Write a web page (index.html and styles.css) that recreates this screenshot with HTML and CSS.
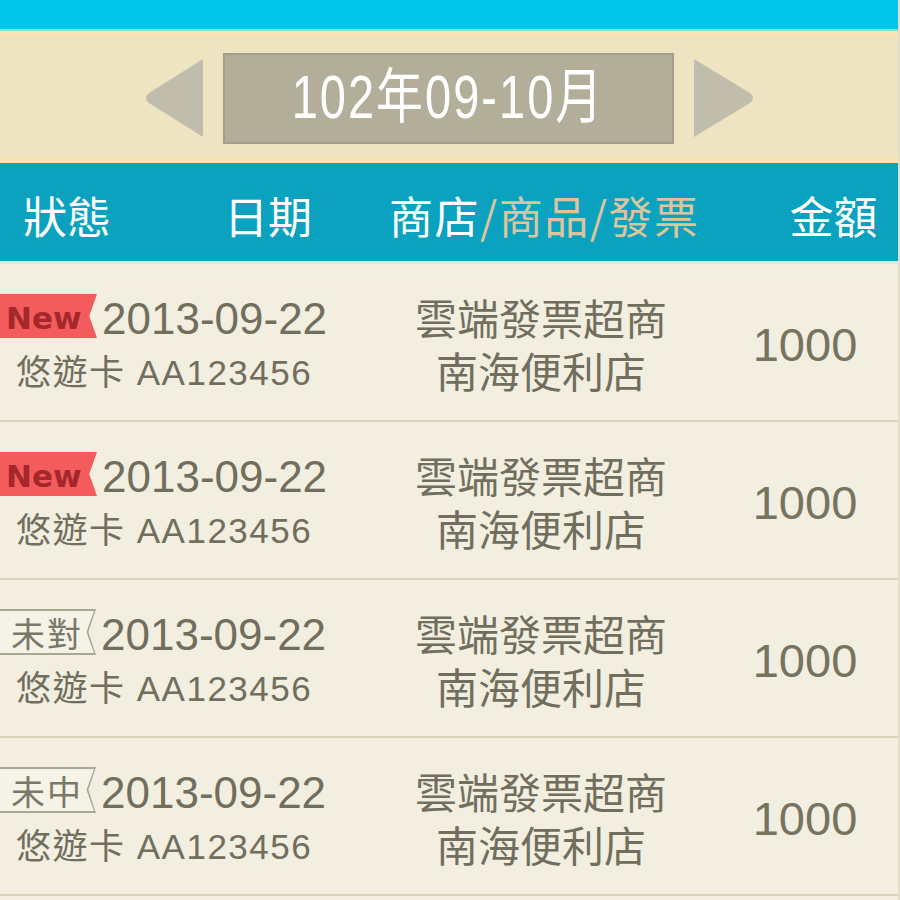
FILE: index.html
```html
<!DOCTYPE html>
<html lang="zh-Hant">
<head>
<meta charset="utf-8">
<title>發票</title>
<link rel="stylesheet" href="styles.css">
</head>
<body>
<div class="app">
  <div class="topbar"></div>
  <div class="period">
    <svg class="arrow" width="60" height="78" viewBox="0 0 60 78"><path d="M60 0 V78 L6 44 Q0 39 6 34 Z" fill="#c1bdad"/></svg>
    <div class="month"><span class="month-text">102年09-10月</span></div>
    <svg class="arrow" width="62" height="78" viewBox="0 0 62 78"><path d="M0 0 V78 L56 44 Q62 39 56 34 Z" fill="#c1bdad"/></svg>
  </div>
  <div class="thead">
    <span class="th th-status">狀態</span>
    <span class="th th-date">日期</span>
    <span class="th th-store">商店<span class="th-sub">/商品/發票</span></span>
    <span class="th th-amount">金額</span>
  </div>
  <div class="rows">
    <div class="row">
      <div class="cell-left">
        <div class="line1"><span class="tag tag-new">New</span><span class="date">2013-09-22</span></div>
        <div class="card">悠遊卡 AA123456</div>
      </div>
      <div class="cell-store"><div class="store-line">雲端發票超商</div><div class="store-line">南海便利店</div></div>
      <div class="cell-amount">1000</div>
    </div>
    <div class="row">
      <div class="cell-left">
        <div class="line1"><span class="tag tag-new">New</span><span class="date">2013-09-22</span></div>
        <div class="card">悠遊卡 AA123456</div>
      </div>
      <div class="cell-store"><div class="store-line">雲端發票超商</div><div class="store-line">南海便利店</div></div>
      <div class="cell-amount">1000</div>
    </div>
    <div class="row">
      <div class="cell-left">
        <div class="line1"><span class="tag tag-outline"><span class="tag-inner">未對</span></span><span class="date">2013-09-22</span></div>
        <div class="card">悠遊卡 AA123456</div>
      </div>
      <div class="cell-store"><div class="store-line">雲端發票超商</div><div class="store-line">南海便利店</div></div>
      <div class="cell-amount">1000</div>
    </div>
    <div class="row">
      <div class="cell-left">
        <div class="line1"><span class="tag tag-outline"><span class="tag-inner">未中</span></span><span class="date">2013-09-22</span></div>
        <div class="card">悠遊卡 AA123456</div>
      </div>
      <div class="cell-store"><div class="store-line">雲端發票超商</div><div class="store-line">南海便利店</div></div>
      <div class="cell-amount">1000</div>
    </div>
  </div>
</div>
</body>
</html>
```
FILE: styles.css
```css
* { box-sizing: border-box; }
html, body { margin: 0; padding: 0; }
body {
  background: #f2eee0;
  font-family: "Liberation Sans", "Noto Sans CJK TC", sans-serif;
  color: #716e5e;
}
.app {
  width: 900px;
  height: 900px;
  overflow: hidden;
  border-right: 2px solid #e2dcc8;
}
.topbar {
  height: 31px;
  background: #00c6ea;
  border-bottom: 2px solid #8fd8de;
}
.period {
  height: 132px;
  background: #efe4c1;
  border-top: 5px solid #fde3b0;
  border-bottom: 5px solid #fde3b0;
  display: flex;
  align-items: center;
  justify-content: center;
  gap: 19px;
  padding-top: 2px;
}
.arrow { display: block; }
.month {
  width: 451px;
  height: 91px;
  background: #b2ae9a;
  border: 2px solid #a29e8b;
  display: flex;
  align-items: center;
  justify-content: center;
  margin: 0 1px;
}
.month-text {
  display: inline-block;
  color: #ffffff;
  font-family: "Liberation Sans", "Noto Sans CJK TC", sans-serif;
  font-size: 47px;
  line-height: 50px;
  letter-spacing: 2px;
  transform: scaleY(1.28);
}
.thead {
  height: 101px;
  background: #0ba2c0;
  border-bottom: 3px solid #e3e7db;
  display: flex;
  align-items: center;
  padding-left: 23px;
  padding-top: 6px;
  font-family: "Noto Sans CJK TC", sans-serif;
  font-size: 44px;
  line-height: 50px;
  color: #ffffff;
}
.th-date { margin-left: 113px; }
.th-store { margin-left: 77px; letter-spacing: 1.5px; }
.th-sub { color: #dcc59c; }
.th-amount { margin-left: 90px; }
.row {
  display: grid;
  grid-template-columns: 372px 338px 190px;
  height: 158px;
  border-bottom: 2px solid #dad2b9;
}
.cell-left {
  padding-top: 29px;
}
.line1 {
  display: flex;
  align-items: center;
  height: 46px;
}
.tag {
  width: 97px;
  height: 44px;
  display: inline-flex;
  align-items: center;
  clip-path: polygon(0 0, 100% 0, 92% 50%, 100% 100%, 0 100%);
}
.tag-new {
  background: #f35b5c;
  color: #a4282b;
  font-family: "DejaVu Sans", sans-serif;
  font-weight: bold;
  font-size: 31px;
  padding-left: 6px;
  padding-top: 3px;
}
.tag-outline {
  background: #aaa795;
  padding: 2px 2px 2px 0;
  height: 46px;
  width: 96px;
}
.tag-inner {
  width: 100%;
  height: 100%;
  background: #f5f2e7;
  clip-path: polygon(0 0, 100% 0, 92% 50%, 100% 100%, 0 100%);
  display: flex;
  align-items: center;
  padding-left: 11px;
  font-family: "Noto Sans CJK TC", sans-serif;
  font-size: 34px;
  letter-spacing: 2px;
  color: #7a7866;
}
.date {
  margin-left: 5px;
  font-size: 44px;
  line-height: 46px;
  padding-top: 6px;
}
.card {
  margin-top: 14px;
  padding-left: 16px;
  font-size: 35px;
  line-height: 40px;
  letter-spacing: 1.5px;
}
.cell-store {
  display: flex;
  flex-direction: column;
  justify-content: center;
  align-items: center;
  gap: 0;
  font-family: "Noto Sans CJK TC", sans-serif;
  font-size: 42px;
  padding-top: 2px;
}
.store-line {
  height: 53px;
  line-height: 53px;
  overflow: visible;
}
.cell-amount {
  display: flex;
  align-items: center;
  justify-content: center;
  padding-left: 0;
  font-size: 47px;
  color: #76735f;
  padding-top: 4px;
}
```
